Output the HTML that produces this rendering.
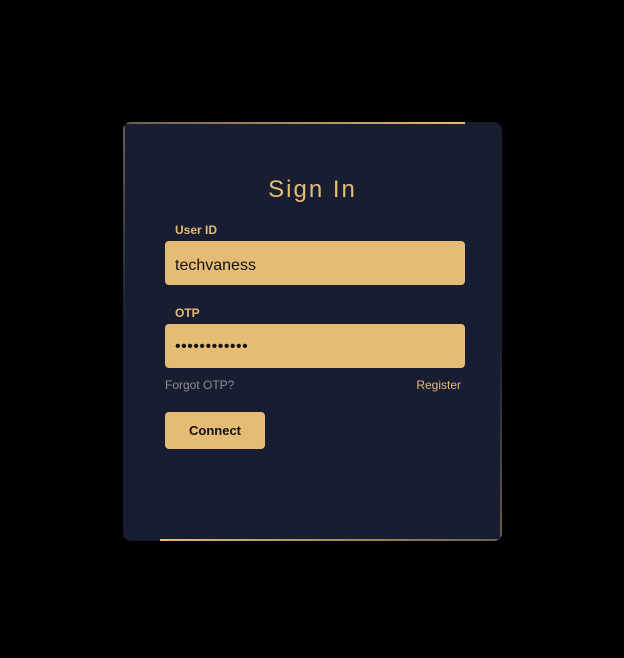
<!DOCTYPE html>
<html><head><style>
html,body{margin:0;padding:0;background:#000;width:624px;height:658px;overflow:hidden;font-family:"Liberation Sans",sans-serif}
.card{position:absolute;left:123px;top:122px;width:379px;height:419px;background:#181d31;border-radius:8px;overflow:hidden}
.t1{position:absolute;left:0;top:0;width:342px;height:2px;background:linear-gradient(90deg,#6b5f4c,#e5bb75)}
.l1{position:absolute;left:0;top:0;width:2px;height:200px;background:linear-gradient(180deg,#6b5f4c,rgba(107,95,76,0))}
.b1{position:absolute;right:0;bottom:0;width:342px;height:2px;background:linear-gradient(90deg,#e5bb75,#6b5f4c)}
.r1{position:absolute;right:0;bottom:0;width:2px;height:200px;background:linear-gradient(0deg,#6b5f4c,rgba(107,95,76,0))}
h1{position:absolute;left:0;width:379px;top:54px;margin:0;text-align:center;font-weight:normal;font-size:24px;letter-spacing:2px;color:#e5bb75}
.lab{position:absolute;left:52px;font-size:12px;font-weight:bold;color:#e5bb75}
.inp{position:absolute;left:42px;width:300px;height:44px;background:#e5bb75;border-radius:4px;padding-left:10px;box-sizing:border-box;font-size:16px;line-height:50px;color:#111}
.f{position:absolute;top:256px;left:42px;font-size:12px;color:#8a8c96}
.reg{position:absolute;top:256px;right:41px;font-size:12px;color:#e5bb75}
.btn{position:absolute;left:42px;top:290px;width:100px;height:37px;background:#e5bb75;border-radius:4px;text-align:center;line-height:37px;font-size:13px;font-weight:bold;color:#111}
</style></head><body>
<div class="card">
<div class="t1"></div><div class="l1"></div><div class="b1"></div><div class="r1"></div>
<h1>Sign In</h1>
<div class="lab" style="top:101px">User ID</div>
<div class="inp" style="top:119px">techvaness</div>
<div class="lab" style="top:184px">OTP</div>
<div class="inp" style="top:202px;letter-spacing:0.5px;line-height:46px">••••••••••••</div>
<div class="f">Forgot OTP?</div>
<div class="reg">Register</div>
<div class="btn">Connect</div>
</div>
</body></html>
